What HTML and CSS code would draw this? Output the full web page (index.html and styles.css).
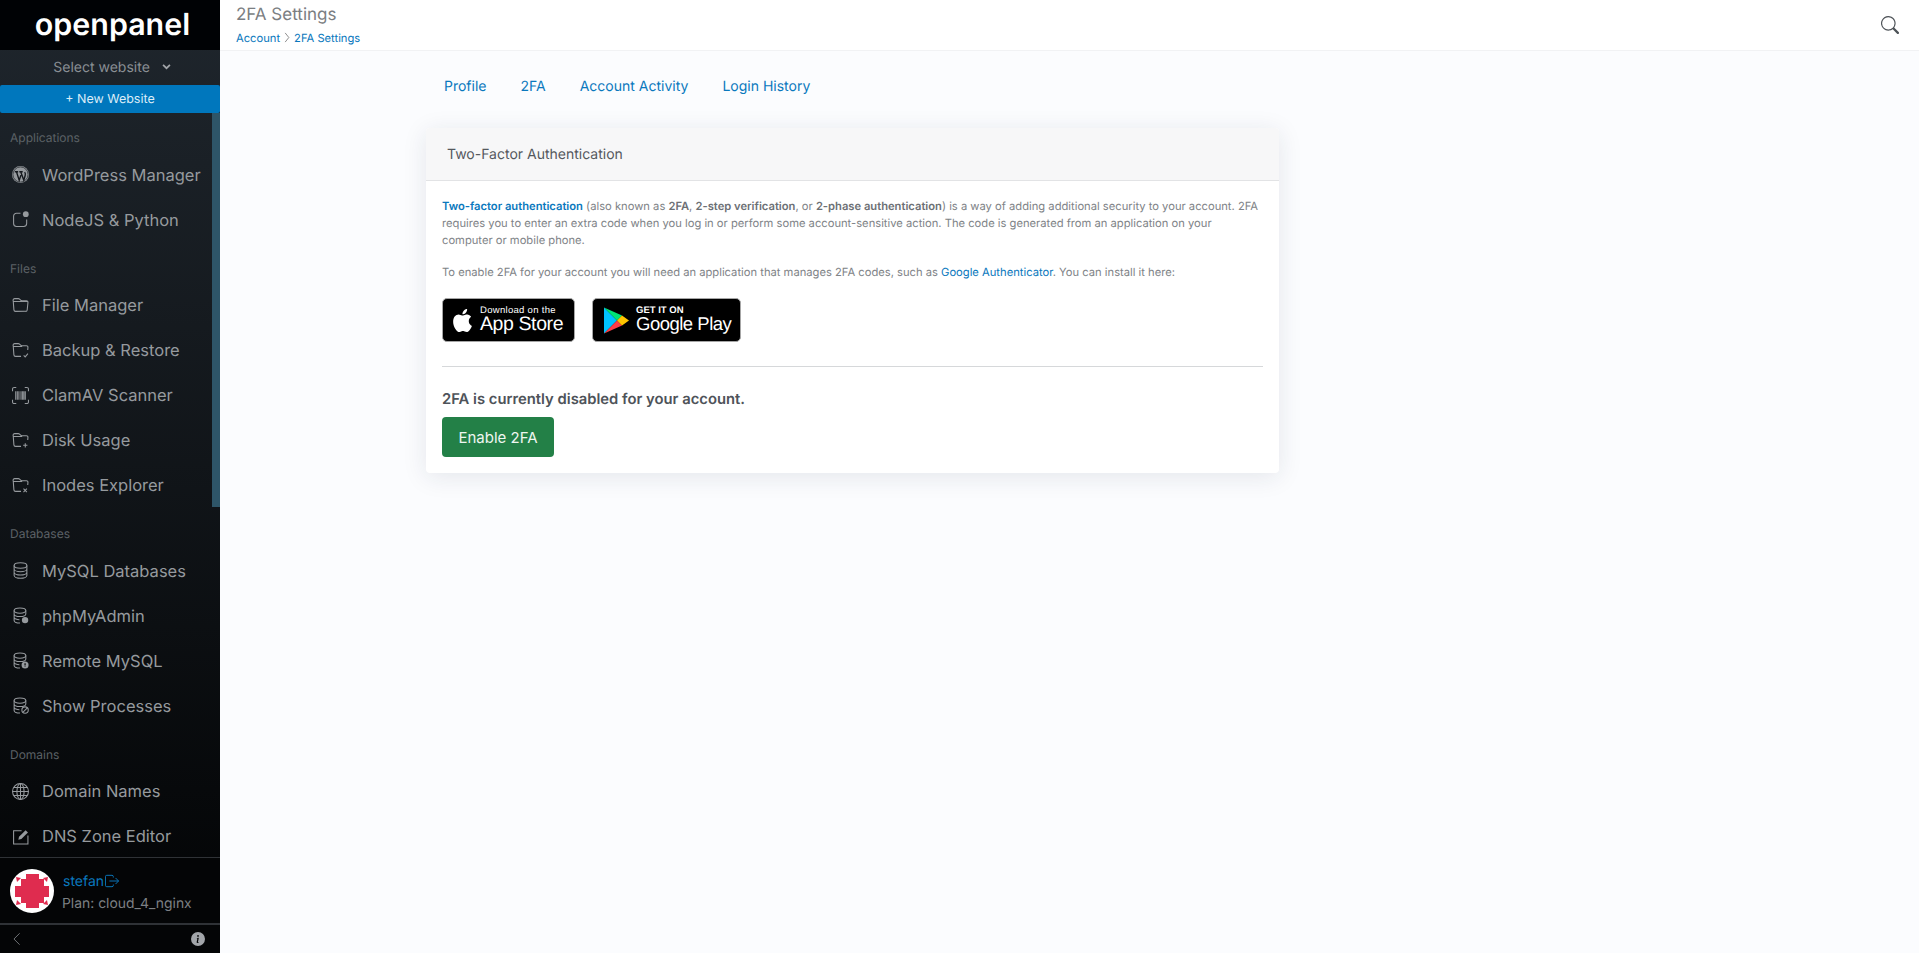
FILE: index.html
```html
<!DOCTYPE html>
<html lang="en">
<head>
    <meta charset="UTF-8">
    <meta name="viewport" content="width=device-width, initial-scale=1.0">
    <title>2FA Settings</title>
    <link rel="stylesheet" href="styles.css">
</head>
<body>
    <svg class="defs" width="0" height="0" aria-hidden="true">
        <symbol id="db" viewBox="0 0 16 16">
            <ellipse cx="7.5" cy="3.4" rx="5.5" ry="2.4"/>
            <path d="M2 3.4v9.2c0 1.3 2.5 2.4 5.5 2.4M13 3.4v3.2M2 6.5c0 1.3 2.5 2.4 5.5 2.4s5.5-1.1 5.5-2.4M2 9.6c0 1.3 2.5 2.4 5 2.4"/>
        </symbol>
        <symbol id="folder" viewBox="0 0 16 16">
            <path d="M1.2 4.2 1 3a1.5 1.5 0 0 1 1.5-1.5h3.4c.5 0 .9.2 1.2.5l1 1c.3.3.7.5 1.2.5h4.1A1.5 1.5 0 0 1 15 5.2l-.2 2.3M1.2 4.2h8.4M1.2 4.2 1.8 12.1a1.5 1.5 0 0 0 1.5 1.4h5.2"/>
        </symbol>
    </svg>

    <div class="layout">
        <!-- sidebar -->
        <aside class="sidebar">
            <div class="logo">openpanel</div>
            <div class="site-select">Select website <svg class="chev" viewBox="0 0 16 16"><path d="M3 5.5l5 5 5-5"/></svg></div>
            <a class="new-site">+ New Website</a>

            <div class="nav-wrap">
                <nav class="nav">
                    <div class="nav-title">Applications</div>
                    <a class="nav-item"><svg class="ico" viewBox="0 0 16 16"><circle class="solid" cx="8" cy="8" r="8"/><circle class="thin-dark" cx="8" cy="8" r="7.1"/><path class="wp" d="M2.6 5.4h3.2M6.9 5.4h3.2M4.2 5.4l2.6 8 1.6-4.8M8.2 5.4l2.9 8 1.3-4.4c.4-1.2.2-2.3-.5-3.2"/></svg>WordPress Manager</a>
                    <a class="nav-item"><svg class="ico" viewBox="0 0 16 16"><path d="M8 2.2H4.2A2.7 2.7 0 0 0 1.5 4.9v6.9a2.7 2.7 0 0 0 2.7 2.7h6.9a2.7 2.7 0 0 0 2.7-2.7V8"/><circle class="solid" cx="13" cy="3" r="2.7"/></svg>NodeJS &amp; Python</a>

                    <div class="nav-title">Files</div>
                    <a class="nav-item"><svg class="ico" viewBox="0 0 16 16"><path d="M1.2 4.2 1 3a1.5 1.5 0 0 1 1.5-1.5h3.4c.5 0 .9.2 1.2.5l1 1c.3.3.7.5 1.2.5h4.1A1.5 1.5 0 0 1 15 5.2l-.7 7a1.5 1.5 0 0 1-1.5 1.3H3.3a1.5 1.5 0 0 1-1.5-1.4zM1.2 4.2H15"/></svg>File Manager</a>
                    <a class="nav-item"><svg class="ico" viewBox="0 0 16 16"><use href="#folder"/><path d="M11 12.6l1.4 1.4 2.6-3"/></svg>Backup &amp; Restore</a>
                    <a class="nav-item"><svg class="ico" viewBox="0 0 16 16"><path d="M.5 4V2A1.5 1.5 0 0 1 2 .5h2M12 .5h2A1.5 1.5 0 0 1 15.5 2v2M15.5 12v2a1.5 1.5 0 0 1-1.5 1.5h-2M4 15.5H2A1.5 1.5 0 0 1 .5 14v-2M3.5 4v8M5 4v8M6.5 4v8M8.5 4v8M10 4v8M11.2 4v8M12.5 4v8"/></svg>ClamAV Scanner</a>
                    <a class="nav-item"><svg class="ico" viewBox="0 0 16 16"><use href="#folder"/><path d="M12.5 10.5v4M10.5 12.5h4"/></svg>Disk Usage</a>
                    <a class="nav-item"><svg class="ico" viewBox="0 0 16 16"><use href="#folder"/><path d="M10.8 11l3.2 3.2M14 11l-3.2 3.2"/></svg>Inodes Explorer</a>

                    <div class="nav-title">Databases</div>
                    <a class="nav-item"><svg class="ico" viewBox="0 0 16 16"><ellipse cx="8" cy="3.3" rx="6" ry="2.6"/><path d="M2 3.3v9.4c0 1.4 2.7 2.6 6 2.6s6-1.2 6-2.6V3.3M2 6.5c0 1.4 2.7 2.6 6 2.6s6-1.2 6-2.6M2 9.6c0 1.4 2.7 2.6 6 2.6s6-1.2 6-2.6"/></svg>MySQL Databases</a>
                    <a class="nav-item"><svg class="ico" viewBox="0 0 16 16"><use href="#db"/><circle class="solid" cx="12.3" cy="12.3" r="3"/></svg>phpMyAdmin</a>
                    <a class="nav-item"><svg class="ico" viewBox="0 0 16 16"><use href="#db"/><circle class="solid" cx="12.3" cy="12.3" r="3.3"/><path class="cut" d="M12.3 10.5v2.2M12.3 13.6v.6"/></svg>Remote MySQL</a>
                    <a class="nav-item"><svg class="ico" viewBox="0 0 16 16"><use href="#db"/><circle cx="12.3" cy="12.3" r="3"/><path d="M10.2 14.4l4.2-4.2"/></svg>Show Processes</a>

                    <div class="nav-title">Domains</div>
                    <a class="nav-item"><svg class="ico" viewBox="0 0 16 16"><circle cx="8" cy="8" r="7.5"/><ellipse cx="8" cy="8" rx="3.4" ry="7.5"/><path d="M8 .5v15M.5 8h15M1.6 4.3h12.8M1.6 11.7h12.8"/></svg>Domain Names</a>
                    <a class="nav-item"><svg class="ico" viewBox="0 0 16 16"><path d="M9 2.5H1.5V15H15V7"/><path class="pen" d="M6 11l.6-2.8 6.2-6.2 2.2 2.2-6.2 6.2z"/></svg>DNS Zone Editor</a>
                </nav>
                <div class="scroll-thumb"></div>
            </div>

            <div class="user-box">
                <svg class="avatar" viewBox="0 0 44 44">
                    <circle cx="22" cy="22" r="22" fill="#fff"/>
                    <path fill="#df2c4f" d="M16 5h13v5h5v7h5v11h-5v6h-5v5H16v-5h-5v-6H5V17h6v-7h5z"/>
                    <path fill="#df2c4f" d="M6 8l5 1-4 4zM38 8l-5 1 4 4zM6 36l5-1-4-4zM38 36l-5-1 4-4z"/>
                </svg>
                <div class="user-info">
                    <a class="user-name">stefan<svg class="logout" viewBox="0 0 16 16"><path d="M9.5 4V3A1.5 1.5 0 0 0 8 1.5H2A1.5 1.5 0 0 0 .5 3v10A1.5 1.5 0 0 0 2 14.5h6A1.5 1.5 0 0 0 9.5 13v-1M5 8h10.5M12 4.5 15.5 8 12 11.5"/></svg></a>
                    <div class="user-plan">Plan: cloud_4_nginx</div>
                </div>
            </div>
            <div class="side-foot">
                <svg class="back" viewBox="0 0 16 16"><path d="M11 1.5 4.5 8l6.5 6.5"/></svg>
                <svg class="info" viewBox="0 0 16 16"><path d="M8 16A8 8 0 1 0 8 0a8 8 0 0 0 0 16zm.93-9.41-1 4.7c-.07.34.03.53.3.53.2 0 .49-.07.69-.25l-.09.42c-.29.35-.92.6-1.47.6-.71 0-1.01-.43-.82-1.34l.74-3.47c.06-.29 0-.4-.29-.47l-.45-.08.08-.38 2.29-.29zM8 5.5a1 1 0 1 1 0-2 1 1 0 0 1 0 2z"/></svg>
            </div>
        </aside>

        <!-- main area -->
        <div class="main">
            <header class="topbar">
                <div>
                    <div class="page-title">2FA Settings</div>
                    <div class="crumbs"><a>Account</a><svg class="crumb-sep" viewBox="0 0 6 12"><path d="M1 1l4 5-4 5"/></svg><a>2FA Settings</a></div>
                </div>
                <svg class="search" viewBox="0 0 16 16"><path d="M11.742 10.344a6.5 6.5 0 1 0-1.397 1.398h-.001c.03.04.062.078.098.115l3.85 3.85a1 1 0 0 0 1.415-1.414l-3.85-3.85a1.007 1.007 0 0 0-.115-.1zM12 6.5a5.5 5.5 0 1 1-11 0 5.5 5.5 0 0 1 11 0z"/></svg>
            </header>

            <div class="content">
                <div class="tabs">
                    <a>Profile</a>
                    <a>2FA</a>
                    <a>Account Activity</a>
                    <a>Login History</a>
                </div>

                <div class="card">
                    <div class="card-head">Two-Factor Authentication</div>
                    <div class="card-body">
                        <p class="info-text"><a class="strong">Two-factor authentication</a> (also known as <b>2FA</b>, <b>2-step verification</b>, or <b>2-phase authentication</b>) is a way of adding additional security to your account. 2FA requires you to enter an extra code when you log in or perform some account-sensitive action. The code is generated from an application on your computer or mobile phone.</p>
                        <p class="info-text">To enable 2FA for your account you will need an application that manages 2FA codes, such as <a>Google Authenticator</a>. You can install it here:</p>

                        <div class="stores">
                            <a class="store store-apple">
                                <svg class="apple" viewBox="0 0 16 16"><path d="M11.182.008C11.148-.03 9.923.023 8.857 1.18c-1.066 1.156-.902 2.482-.878 2.516.024.034 1.52.087 2.475-1.258.955-1.345.762-2.391.728-2.43zm3.314 11.733c-.048-.096-2.325-1.234-2.113-3.422.212-2.189 1.675-2.789 1.698-2.854.023-.065-.597-.79-1.254-1.157a3.692 3.692 0 0 0-1.563-.434c-.108-.003-.483-.095-1.254.116-.508.139-1.653.589-1.968.607-.316.018-1.256-.522-2.267-.665-.647-.125-1.333.131-1.824.328-.49.196-1.422.754-2.074 2.237-.652 1.482-.311 3.83-.067 4.56.244.729.625 1.924 1.273 2.796.576.984 1.34 1.667 1.659 1.899.319.232 1.219.386 1.843.067.502-.308 1.408-.485 1.766-.472.357.013 1.061.154 1.782.539.571.197 1.111.115 1.652-.105.541-.221 1.324-1.059 2.238-2.758.347-.79.505-1.217.473-1.282z"/></svg>
                                <span class="store-text"><small>Download on the</small><strong>App Store</strong></span>
                            </a>
                            <a class="store store-google">
                                <svg class="play" viewBox="0 0 26 28">
                                    <path fill="#00c3ff" d="M1 1v26l13-13z"/>
                                    <path fill="#00e676" d="M1 1l13 13 5-5z"/>
                                    <path fill="#ff3d47" d="M1 27l13-13 5 5z"/>
                                    <path fill="#ffc400" d="M19 9l7 5-7 5-5-5z"/>
                                </svg>
                                <span class="store-text"><small class="caps">GET IT ON</small><strong>Google Play</strong></span>
                            </a>
                        </div>

                        <hr class="sep">
                        <div class="status">2FA is currently disabled for your account.</div>
                        <button class="btn-enable">Enable 2FA</button>
                    </div>
                </div>
            </div>
        </div>
    </div>
</body>
</html>
```

FILE: styles.css
```css
* {
    box-sizing: border-box;
}
html, body {
    height: 100%;
}
body {
    margin: 0;
    font-family: Inter, "Noto Sans", sans-serif;
    text-rendering: geometricPrecision;
    background: #fbfcfe;
    overflow: hidden;
}
a {
    color: #0a78bd;
    text-decoration: none;
}
.defs {
    position: absolute;
}
.layout {
    display: flex;
    height: 953px;
}

/* sidebar */
.sidebar {
    width: 220px;
    flex: none;
    display: flex;
    flex-direction: column;
    height: 100%;
    background: linear-gradient(#1f262d, #020304);
    color: #969a9e;
}
.logo {
    height: 50px;
    flex: none;
    padding-left: 5px;
    background: #000205;
    color: #fff;
    font-size: 30.4px;
    font-weight: 600;
    line-height: 50px;
    text-align: center;
}
.site-select {
    height: 35px;
    flex: none;
    padding-left: 5px;
    font-size: 14px;
    line-height: 35px;
    text-align: center;
    color: #8a8f94;
}
.chev {
    width: 11px;
    height: 11px;
    margin-left: 7px;
    fill: none;
    stroke: #a2a5a9;
    stroke-width: 2.5;
}
.new-site {
    height: 28px;
    flex: none;
    background: #0077bd;
    border-radius: 2px;
    color: #dcedf8;
    font-size: 12.5px;
    line-height: 29px;
    text-align: center;
}
.nav-wrap {
    flex: 1;
    min-height: 0;
    display: flex;
    overflow: hidden;
}
.nav {
    flex: 1;
    min-width: 0;
    padding-top: 16px;
}
.scroll-thumb {
    width: 8px;
    height: 394px;
    flex: none;
    background: #2e5568;
}
.nav-title {
    height: 17px;
    margin: 0 0 6px 10px;
    font-size: 12px;
    line-height: 17px;
    color: #5c6166;
}
.nav-item {
    display: flex;
    align-items: center;
    height: 45px;
    padding-left: 12px;
    font-size: 16.5px;
    white-space: nowrap;
    color: #969a9e;
}
.nav-item + .nav-title {
    margin-top: 17.5px;
}
.ico {
    width: 17px;
    height: 17px;
    flex: none;
    margin-right: 13px;
    fill: none;
    stroke: #969a9e;
    stroke-width: 1;
    overflow: visible;
}
.ico .solid {
    fill: #969a9e;
    stroke: none;
}
.ico .thin-dark {
    stroke: #15191e;
    stroke-width: .6;
}
.ico .wp {
    stroke: #15191e;
    stroke-width: 1.3;
}
.ico .cut {
    stroke: #0a0c0f;
    stroke-width: 1.2;
}
.ico .pen {
    fill: #969a9e;
    stroke: none;
}
.user-box {
    height: 68px;
    flex: none;
    display: flex;
    align-items: center;
    padding: 0 0 0 10px;
    background: #040506;
    border-top: 1px solid #2f3236;
    border-bottom: 2px solid #2f3236;
}
.avatar {
    width: 44px;
    height: 44px;
    flex: none;
    margin-right: 8px;
}
.user-info {
    padding-top: 5px;
}
.user-name {
    display: block;
    margin-left: 1px;
    font-size: 14px;
    line-height: 20px;
}
.logout {
    width: 14px;
    height: 14px;
    margin-left: 1px;
    vertical-align: -2px;
    fill: none;
    stroke: #0a78bd;
    stroke-width: 1.1;
}
.user-plan {
    margin-top: 2px;
    font-size: 13.9px;
    line-height: 20px;
    color: #7d8084;
    white-space: nowrap;
}
.side-foot {
    height: 28px;
    flex: none;
    display: flex;
    align-items: center;
    justify-content: space-between;
    padding: 0 15px 0 10px;
    background: #040506;
}
.back {
    width: 14px;
    height: 14px;
    fill: none;
    stroke: #7d8084;
    stroke-width: 1;
}
.info {
    width: 14px;
    height: 14px;
    fill: #a2a5a9;
}

/* main */
.main {
    flex: 1;
    min-width: 0;
}
.topbar {
    height: 51px;
    display: flex;
    justify-content: space-between;
    align-items: center;
    padding: 0 20px 0 16px;
    background: #fff;
    border-bottom: 1px solid #f1f2f4;
}
.page-title {
    font-size: 17px;
    line-height: 20px;
    color: #7b7e82;
    margin-top: -1px;
}
.crumbs {
    margin-top: 6px;
    display: flex;
    align-items: center;
    font-size: 11.2px;
    line-height: 14px;
}
.crumb-sep {
    width: 6px;
    height: 11px;
    margin: 0 4px;
    fill: none;
    stroke: #666;
    stroke-width: .8;
}
.search {
    width: 18px;
    height: 18px;
    margin-top: -1px;
    fill: #4d5257;
}
.content {
    padding: 0 0 0 207px;
}
.tabs {
    display: flex;
    padding-top: 26px;
    height: 77px;
}
.tabs a {
    padding: 0 17px;
    font-size: 14px;
    line-height: 20px;
}
.card {
    width: 853px;
    margin-left: -1px;
    background: #fff;
    border-radius: 4px;
    box-shadow: 0 4px 24px rgba(30, 40, 70, .1);
}
.card-head {
    height: 53px;
    padding-left: 21px;
    background: #f7f7f8;
    border-bottom: 1px solid #e2e3e5;
    border-radius: 4px 4px 0 0;
    font-size: 14px;
    line-height: 54px;
    color: #54585d;
}
.card-body {
    padding: 17px 16px 16px;
    height: 292px;
}
.info-text {
    margin: 0 0 15px;
    font-size: 11.2px;
    line-height: 17px;
    color: #808387;
}
.info-text b {
    font-weight: 600;
    color: #6c7075;
}
.info-text .strong {
    font-weight: 600;
}
.stores {
    display: flex;
    gap: 17px;
    margin-top: 17px;
}
.store {
    display: flex;
    align-items: center;
    height: 44px;
    background: #000;
    border: 1px solid #a6a6a6;
    border-radius: 5px;
    color: #fff;
}
.store-apple {
    width: 133px;
    padding-left: 8px;
}
.store-google {
    width: 149px;
    padding-left: 10px;
}
.apple {
    width: 23px;
    height: 25px;
    margin-right: 6px;
    fill: #fff;
}
.play {
    width: 26px;
    height: 29px;
    margin-right: 7px;
}
.store-text {
    display: block;
    white-space: nowrap;
    font-family: "Liberation Sans", sans-serif;
}
.store-text small {
    display: block;
    font-size: 9.5px;
    line-height: 8px;
    letter-spacing: .3px;
}
.store-text .caps {
    font-size: 9.5px;
    font-weight: 700;
    letter-spacing: 0;
}
.store-text strong {
    display: block;
    font-weight: 400;
    font-size: 19.5px;
    line-height: 18px;
    letter-spacing: -.4px;
}
.store-google strong {
    font-size: 18.5px;
    letter-spacing: -.5px;
}
.sep {
    margin: 24px 0 0;
    border: 0;
    border-top: 1px solid #d6d8da;
}
.status {
    margin-top: 23px;
    font-size: 14.8px;
    font-weight: 600;
    line-height: 18px;
    color: #4e5359;
}
.btn-enable {
    display: block;
    width: 112px;
    height: 40px;
    margin-top: 9px;
    border: 0;
    border-radius: 4px;
    background: #238047;
    color: #eef6f0;
    font-family: inherit;
    font-size: 15px;
}
```
